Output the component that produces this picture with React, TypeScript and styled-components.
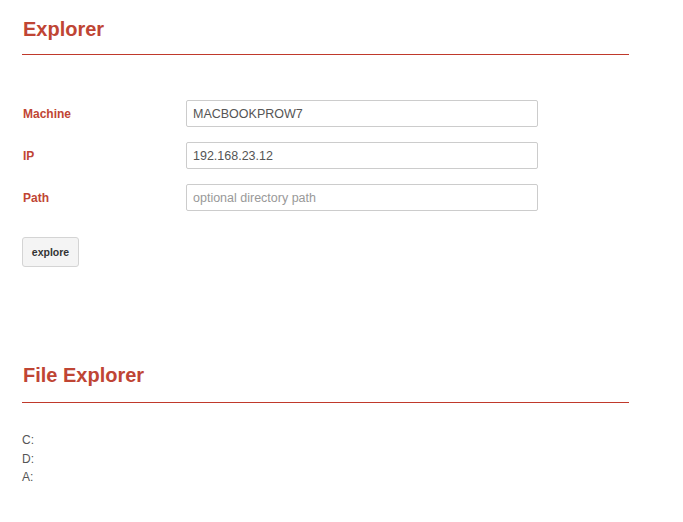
import styled, { createGlobalStyle } from "styled-components";

const GlobalStyle = createGlobalStyle`
  html, body {
    margin: 0;
    padding: 0;
    background: #ffffff;
    font-family: "Liberation Sans", Arial, sans-serif;
  }
`;

const Page = styled.div`
  width: 607px;
  padding: 18px 0 0 22px;
`;

const Section = styled.section<{ $gap?: number }>`
  margin-bottom: ${(p) => p.$gap ?? 0}px;
`;

const Heading = styled.h2<{ $pad: number }>`
  margin: 0;
  padding: 0 0 ${(p) => p.$pad}px 1px;
  font-size: 20px;
  line-height: 22px;
  font-weight: bold;
  color: #bf4534;
  border-bottom: 1px solid #c0392b;
`;

const Form = styled.form`
  display: flex;
  flex-direction: column;
  gap: 15px;
  padding-top: 45px;
`;

const Row = styled.div`
  display: grid;
  grid-template-columns: 164px 352px;
  align-items: center;
`;

const Label = styled.label`
  padding-left: 1px;
  font-size: 12px;
  font-weight: bold;
  color: #bf4534;
`;

const Input = styled.input`
  box-sizing: border-box;
  height: 27px;
  width: 100%;
  margin: 0;
  padding: 0 6px;
  border: 1px solid #cccccc;
  border-radius: 2px;
  font-family: "Liberation Sans", Arial, sans-serif;
  font-size: 12.5px;
  color: #555555;
  outline: none;
  &::placeholder {
    color: #999999;
  }
`;

const Button = styled.button`
  align-self: flex-start;
  margin-top: 11px;
  box-sizing: border-box;
  width: 57px;
  height: 30px;
  padding: 0;
  border: 1px solid #d4d4d4;
  border-radius: 3px;
  background: #f4f4f4;
  font-family: "Liberation Sans", Arial, sans-serif;
  font-size: 10.5px;
  font-weight: bold;
  color: #333333;
`;

const DriveList = styled.ul`
  list-style: none;
  margin: 0;
  padding: 28px 0 0 0;
`;

const Drive = styled.li`
  font-size: 12px;
  line-height: 18.5px;
  color: #555555;
`;

const fields = [
  { label: "Machine", value: "MACBOOKPROW7", placeholder: "" },
  { label: "IP", value: "192.168.23.12", placeholder: "" },
  { label: "Path", value: "", placeholder: "optional directory path" },
];

const drives = ["C:", "D:", "A:"];

export default function App() {
  return (
    <>
      <GlobalStyle />
      <Page>
        <Section $gap={97}>
          <Heading $pad={14}>Explorer</Heading>
          <Form onSubmit={(e) => e.preventDefault()}>
            {fields.map((f) => (
              <Row key={f.label}>
                <Label>{f.label}</Label>
                <Input defaultValue={f.value} placeholder={f.placeholder} />
              </Row>
            ))}
            <Button type="submit">explore</Button>
          </Form>
        </Section>
        <Section>
          <Heading $pad={16}>File Explorer</Heading>
          <DriveList>
            {drives.map((d) => (
              <Drive key={d}>{d}</Drive>
            ))}
          </DriveList>
        </Section>
      </Page>
    </>
  );
}
